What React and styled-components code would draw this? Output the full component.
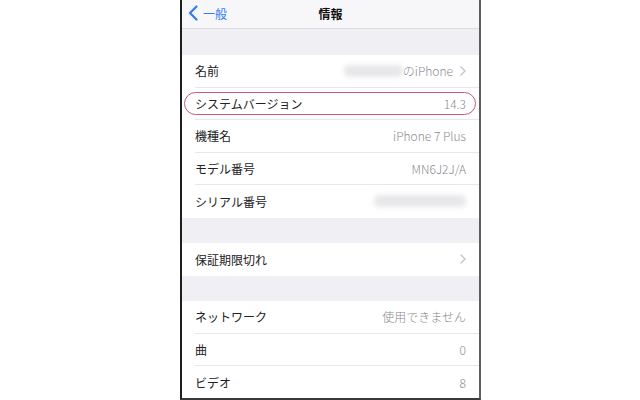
import React from "react";
import styled, { createGlobalStyle } from "styled-components";

const Global = createGlobalStyle`
  html, body { margin: 0; padding: 0; background: #ffffff; }
  body { font-family: "Noto Sans CJK JP", "Noto Sans", sans-serif; }
  * { box-sizing: border-box; }
`;

const Page = styled.div`
  width: 640px;
  height: 400px;
  overflow: hidden;
  background: #ffffff;
  display: flex;
  justify-content: flex-start;
  padding-left: 180px;
`;

const Phone = styled.div`
  width: 301px;
  height: 400px;
  border-left: 2px solid #1e1e1e;
  border-right: 2px solid #5e5e5e;
  border-bottom: 2px solid #3a3a3a;
  background: #efeff4;
  display: flex;
  flex-direction: column;
  overflow: hidden;
`;

const NavBar = styled.div`
  height: 29px;
  flex: 0 0 29px;
  background: #f7f7f9;
  border-bottom: 1px solid #dcdce0;
  display: grid;
  grid-template-columns: 1fr auto 1fr;
  align-items: center;
  padding: 0 6px;
`;

const Back = styled.div`
  display: flex;
  align-items: center;
  gap: 5px;
  color: #2f7cf6;
  font-size: 12px;
  padding-bottom: 2px;
`;

const Title = styled.div`
  font-size: 12px;
  font-weight: 700;
  color: #111;
  padding-bottom: 2px;
`;

const Gap = styled.div`
  height: ${(p) => p.$h}px;
  flex: 0 0 ${(p) => p.$h}px;
  background: #efeff4;
`;

const Group = styled.div`
  background: #ffffff;
  display: flex;
  flex-direction: column;
`;

const Row = styled.div`
  position: relative;
  height: 32.5px;
  flex: 0 0 32.5px;
  display: flex;
  align-items: center;
  padding-left: 13px;
`;

const RowInner = styled.div`
  flex: 1;
  height: 100%;
  display: flex;
  align-items: center;
  justify-content: space-between;
  padding-right: 13px;
  border-bottom: ${(p) => (p.$last ? "none" : "1px solid #e8e8ec")};
`;

const Label = styled.span`
  font-size: 12px;
  color: #222224;
`;

const Value = styled.span`
  display: flex;
  align-items: center;
  gap: 7px;
  font-size: 12px;
  font-weight: 300;
  color: #8a8a8f;
`;

const ValueText = styled.span`
  display: flex;
  align-items: center;
`;

const Blur = styled.span`
  display: inline-block;
  width: ${(p) => p.$w}px;
  height: 12px;
  border-radius: 5px;
  background: #e7e7ea;
  filter: blur(2.5px);
`;

const Highlight = styled.div`
  position: absolute;
  left: 2px;
  right: 3px;
  top: 4.5px;
  height: 23px;
  border: 1.5px solid #c9587f;
  border-radius: 12px;
  pointer-events: none;
`;

const Chevron = () => (
  <svg width="6" height="10" viewBox="0 0 6 10">
    <path d="M1 1 L5 5 L1 9" fill="none" stroke="#c2c2c7" strokeWidth="1.3" strokeLinecap="round" strokeLinejoin="round" />
  </svg>
);

const BackChevron = () => (
  <svg width="10" height="16" viewBox="0 0 10 16">
    <path d="M8.5 1.5 L2 8 L8.5 14.5" fill="none" stroke="#2f7cf6" strokeWidth="2.2" strokeLinecap="round" strokeLinejoin="round" />
  </svg>
);

const Item = ({ label, value, chevron, last, highlight, blurW }) => (
  <Row>
    <RowInner $last={last}>
      <Label>{label}</Label>
      <Value>
        <ValueText>
          {blurW ? <Blur $w={blurW} /> : null}
          {value}
        </ValueText>
        {chevron ? <Chevron /> : null}
      </Value>
    </RowInner>
    {highlight ? <Highlight /> : null}
  </Row>
);

export default function App() {
  return (
    <>
      <Global />
      <Page>
        <Phone>
          <NavBar>
            <Back>
              <BackChevron />
              <span>一般</span>
            </Back>
            <Title>情報</Title>
            <div />
          </NavBar>
          <Gap $h={26} />
          <Group>
            <Item label="名前" value="のiPhone" blurW={59} chevron />
            <Item label="システムバージョン" value="14.3" highlight />
            <Item label="機種名" value="iPhone 7 Plus" />
            <Item label="モデル番号" value="MN6J2J/A" />
            <Item label="シリアル番号" value="" blurW={92} last />
          </Group>
          <Gap $h={25.5} />
          <Group>
            <Item label="保証期限切れ" value="" chevron last />
          </Group>
          <Gap $h={25.5} />
          <Group>
            <Item label="ネットワーク" value="使用できません" />
            <Item label="曲" value="0" />
            <Item label="ビデオ" value="8" last />
          </Group>
        </Phone>
      </Page>
    </>
  );
}
